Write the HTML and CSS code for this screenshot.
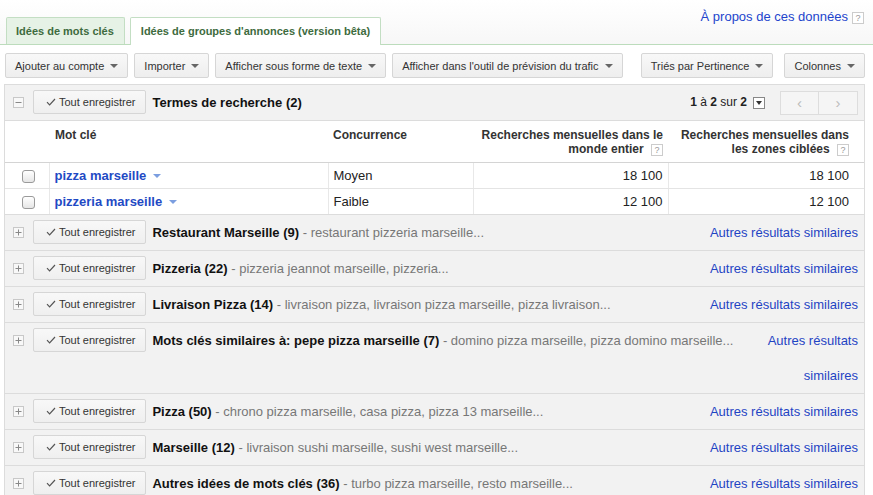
FILE: index.html
```html
<!DOCTYPE html>
<html lang="fr">
<head>
    <meta charset="UTF-8">
    <title>Idées de groupes d'annonces</title>
    <link rel="stylesheet" href="styles.css">
</head>
<body>
    <div class="top">
        <div class="tabs">
            <div class="tab">Idées de mots clés</div>
            <div class="tab active">Idées de groupes d'annonces (version bêta)</div>
        </div>
        <div class="about"><a href="#">À propos de ces données</a><span class="help">?</span></div>
    </div>

    <div class="page">
        <div class="toolbar">
            <div class="btn-group">
                <button class="btn">Ajouter au compte <span class="caret"></span></button>
                <button class="btn">Importer <span class="caret"></span></button>
                <button class="btn">Afficher sous forme de texte <span class="caret"></span></button>
                <button class="btn">Afficher dans l'outil de prévision du trafic <span class="caret"></span></button>
            </div>
            <div class="btn-group right">
                <button class="btn">Triés par Pertinence <span class="caret"></span></button>
                <button class="btn">Colonnes <span class="caret"></span></button>
            </div>
        </div>

        <div class="panel">
            <div class="group">
                <span class="toggle"><svg width="11" height="11" viewBox="0 0 11 11"><path d="M2.5 5.5h6" stroke="#888" stroke-width="1"/></svg></span>
                <button class="save"><svg width="10" height="8" viewBox="0 0 10 8"><path d="M1 4.2l2.6 2.6L9 1" fill="none" stroke="#555" stroke-width="1.2"/></svg>Tout enregistrer</button>
                <div class="group-text"><b>Termes de recherche (2)</b></div>
                <div class="pager">
                    <span class="count"><b>1</b> à <b>2</b> sur <b>2</b></span>
                    <span class="pager-menu"></span>
                    <span class="pager-btns">
                        <button>&lsaquo;</button><button>&rsaquo;</button>
                    </span>
                </div>
            </div>

            <table class="kw">
                <thead>
                    <tr>
                        <th class="c-check"></th>
                        <th class="c-kw">Mot clé</th>
                        <th class="c-comp">Concurrence</th>
                        <th class="c-num">Recherches mensuelles dans le monde entier <span class="help">?</span></th>
                        <th class="c-num last">Recherches mensuelles dans les zones ciblées <span class="help">?</span></th>
                    </tr>
                </thead>
                <tbody>
                    <tr>
                        <td class="c-check"><input type="checkbox"></td>
                        <td class="c-kw"><a href="#">pizza marseille</a><span class="kw-caret"></span></td>
                        <td>Moyen</td>
                        <td class="c-num">18 100</td>
                        <td class="c-num last">18 100</td>
                    </tr>
                    <tr>
                        <td class="c-check"><input type="checkbox"></td>
                        <td class="c-kw"><a href="#">pizzeria marseille</a><span class="kw-caret"></span></td>
                        <td>Faible</td>
                        <td class="c-num">12 100</td>
                        <td class="c-num last">12 100</td>
                    </tr>
                </tbody>
            </table>

            <div class="group">
                <span class="toggle"><svg width="11" height="11" viewBox="0 0 11 11"><path d="M2.5 5.5h6M5.5 2.5v6" stroke="#888" stroke-width="1"/></svg></span>
                <button class="save"><svg width="10" height="8" viewBox="0 0 10 8"><path d="M1 4.2l2.6 2.6L9 1" fill="none" stroke="#555" stroke-width="1.2"/></svg>Tout enregistrer</button>
                <div class="group-text"><b>Restaurant Marseille (9)</b> <span class="desc">- restaurant pizzeria marseille...</span></div>
                <a class="more" href="#">Autres résultats similaires</a>
            </div>
            <div class="group">
                <span class="toggle"><svg width="11" height="11" viewBox="0 0 11 11"><path d="M2.5 5.5h6M5.5 2.5v6" stroke="#888" stroke-width="1"/></svg></span>
                <button class="save"><svg width="10" height="8" viewBox="0 0 10 8"><path d="M1 4.2l2.6 2.6L9 1" fill="none" stroke="#555" stroke-width="1.2"/></svg>Tout enregistrer</button>
                <div class="group-text"><b>Pizzeria (22)</b> <span class="desc">- pizzeria jeannot marseille, pizzeria...</span></div>
                <a class="more" href="#">Autres résultats similaires</a>
            </div>
            <div class="group">
                <span class="toggle"><svg width="11" height="11" viewBox="0 0 11 11"><path d="M2.5 5.5h6M5.5 2.5v6" stroke="#888" stroke-width="1"/></svg></span>
                <button class="save"><svg width="10" height="8" viewBox="0 0 10 8"><path d="M1 4.2l2.6 2.6L9 1" fill="none" stroke="#555" stroke-width="1.2"/></svg>Tout enregistrer</button>
                <div class="group-text"><b>Livraison Pizza (14)</b> <span class="desc">- livraison pizza, livraison pizza marseille, pizza livraison...</span></div>
                <a class="more" href="#">Autres résultats similaires</a>
            </div>
            <div class="group">
                <span class="toggle"><svg width="11" height="11" viewBox="0 0 11 11"><path d="M2.5 5.5h6M5.5 2.5v6" stroke="#888" stroke-width="1"/></svg></span>
                <button class="save"><svg width="10" height="8" viewBox="0 0 10 8"><path d="M1 4.2l2.6 2.6L9 1" fill="none" stroke="#555" stroke-width="1.2"/></svg>Tout enregistrer</button>
                <div class="group-text"><b>Mots clés similaires à: pepe pizza marseille (7)</b> <span class="desc">- domino pizza marseille, pizza domino marseille...</span></div>
                <a class="more" href="#">Autres résultats similaires</a>
            </div>
            <div class="group">
                <span class="toggle"><svg width="11" height="11" viewBox="0 0 11 11"><path d="M2.5 5.5h6M5.5 2.5v6" stroke="#888" stroke-width="1"/></svg></span>
                <button class="save"><svg width="10" height="8" viewBox="0 0 10 8"><path d="M1 4.2l2.6 2.6L9 1" fill="none" stroke="#555" stroke-width="1.2"/></svg>Tout enregistrer</button>
                <div class="group-text"><b>Pizza (50)</b> <span class="desc">- chrono pizza marseille, casa pizza, pizza 13 marseille...</span></div>
                <a class="more" href="#">Autres résultats similaires</a>
            </div>
            <div class="group">
                <span class="toggle"><svg width="11" height="11" viewBox="0 0 11 11"><path d="M2.5 5.5h6M5.5 2.5v6" stroke="#888" stroke-width="1"/></svg></span>
                <button class="save"><svg width="10" height="8" viewBox="0 0 10 8"><path d="M1 4.2l2.6 2.6L9 1" fill="none" stroke="#555" stroke-width="1.2"/></svg>Tout enregistrer</button>
                <div class="group-text"><b>Marseille (12)</b> <span class="desc">- livraison sushi marseille, sushi west marseille...</span></div>
                <a class="more" href="#">Autres résultats similaires</a>
            </div>
            <div class="group">
                <span class="toggle"><svg width="11" height="11" viewBox="0 0 11 11"><path d="M2.5 5.5h6M5.5 2.5v6" stroke="#888" stroke-width="1"/></svg></span>
                <button class="save"><svg width="10" height="8" viewBox="0 0 10 8"><path d="M1 4.2l2.6 2.6L9 1" fill="none" stroke="#555" stroke-width="1.2"/></svg>Tout enregistrer</button>
                <div class="group-text"><b>Autres idées de mots clés (36)</b> <span class="desc">- turbo pizza marseille, resto marseille...</span></div>
                <a class="more" href="#">Autres résultats similaires</a>
            </div>
        </div>
    </div>
</body>
</html>
```

FILE: styles.css
```css
body {
    margin: 0;
    font-family: "Liberation Sans", Arial, sans-serif;
    font-size: 13px;
    color: #222;
    background-color: #fff;
}

a {
    text-decoration: none;
}

/* top tabs */
.top {
    display: flex;
    justify-content: space-between;
    height: 44px;
    border-bottom: 1px solid #bcdcbc;
    background: linear-gradient(#fff, #f7f7f7);
}

.tabs {
    display: flex;
    align-items: flex-end;
    padding-left: 6px;
    gap: 5px;
}

.tab {
    height: 26px;
    line-height: 26px;
    padding: 0 10px 0 9px;
    border: 1px solid #c3dec3;
    border-bottom: none;
    background-color: #e6f2e6;
    color: #3e6b3e;
    font-size: 11px;
    font-weight: bold;
    border-radius: 2px 2px 0 0;
}

.tab.active {
    height: 27px;
    margin-bottom: -1px;
    padding: 0 10px;
    background-color: #fff;
}

.about {
    padding: 9px 9px 0 0;
    font-size: 13px;
}

.about a {
    color: #2244cc;
}

.help {
    display: inline-block;
    width: 10px;
    height: 10px;
    margin-left: 4px;
    border: 1px solid #ccc;
    background-color: #fff;
    color: #999;
    font-size: 9px;
    line-height: 10px;
    text-align: center;
    vertical-align: 0;
    font-weight: normal;
}

/* toolbar */
.page {
    padding-left: 4px;
    width: 861px;
}

.toolbar {
    display: flex;
    justify-content: space-between;
    padding: 8px 0 0 1px;
}

.btn-group {
    display: flex;
    gap: 6px;
}

.btn-group.right {
    gap: 11px;
}

.btn {
    flex: none;
    height: 25px;
    padding: 0 9px;
    border: 1px solid #d6d6d6;
    border-radius: 2px;
    background: linear-gradient(#f8f8f8, #eeeeee);
    font-family: inherit;
    font-size: 11px;
    color: #333;
    white-space: nowrap;
}

.caret {
    display: inline-block;
    margin-left: 3px;
    vertical-align: 2px;
    border-left: 4px solid transparent;
    border-right: 4px solid transparent;
    border-top: 4px solid #666;
}

/* panel */
.panel {
    margin-top: 6px;
    border: 1px solid #dcdcdc;
    border-bottom: none;
}

.group {
    display: flex;
    align-items: flex-start;
    min-height: 35px;
    line-height: 35px;
    padding-left: 8px;
    background-color: #f2f2f2;
    border-bottom: 1px solid #dcdcdc;
}

.kw + .group {
    border-top: 1px solid #dcdcdc;
}

.toggle {
    display: flex;
    flex: none;
    width: 11px;
    height: 11px;
    margin-top: 12px;
    border: 1px solid #c8c8c8;
    background-color: #f8f8f8;
    box-sizing: border-box;
}

.toggle svg {
    margin: -1px;
}

.save {
    display: flex;
    flex: none;
    align-items: center;
    gap: 3px;
    height: 24px;
    margin: 5px 6px 0 9px;
    padding: 0 10px 0 12px;
    border: 1px solid #d6d6d6;
    border-radius: 2px;
    background: linear-gradient(#f8f8f8, #efefef);
    font-family: inherit;
    font-size: 11px;
    color: #333;
    white-space: nowrap;
}

.group-text {
    flex: none;
    white-space: nowrap;
}

.group-text b {
    color: #111;
}

.desc {
    color: #777;
}

.more {
    flex: 1;
    min-width: 0;
    padding: 0 6px 0 25px;
    text-align: right;
    color: #1f44c4;
}

.pager {
    display: flex;
    align-items: center;
    margin-left: auto;
    height: 35px;
    padding-right: 6px;
}

.count {
    font-size: 12px;
    color: #222;
}

.pager-menu {
    position: relative;
    width: 10px;
    height: 10px;
    margin: 0 15px 0 6px;
    border: 1px solid #888;
    background-color: #fff;
}

.pager-menu::after {
    content: "";
    position: absolute;
    left: 2px;
    top: 3px;
    border-left: 3px solid transparent;
    border-right: 3px solid transparent;
    border-top: 4px solid #333;
}

.pager-btns {
    display: flex;
}

.pager-btns button {
    width: 39px;
    height: 24px;
    border: 1px solid #ddd;
    background-color: #f5f5f5;
    color: #bbb;
    font-family: inherit;
    font-size: 15px;
    line-height: 18px;
}

.pager-btns button + button {
    border-left: none;
}

/* keyword table */
.kw {
    width: 100%;
    table-layout: fixed;
    border-collapse: collapse;
    background-color: #fff;
}

.kw th {
    height: 34px;
    padding: 7px 5px 0;
    vertical-align: top;
    text-align: left;
    font-size: 12px;
    line-height: 14px;
    color: #333;
    border-bottom: 1px solid #d4d4d4;
}

.kw td {
    height: 25px;
    padding: 0 5px;
    border-bottom: 1px solid #e4e4e4;
    border-left: 1px solid #e8e8e8;
}

.kw td:first-child {
    border-left: none;
}

.kw tbody tr:last-child td {
    border-bottom: none;
}

.kw th.c-check {
    width: 34px;
}

.kw td.c-check {
    text-align: center;
}

.kw th.c-kw {
    padding-left: 6px;
    width: 268px;
}

.kw th.c-comp {
    width: 135px;
}

.kw .c-num {
    text-align: right;
}

.kw .c-num.last {
    padding-right: 15px;
}

.kw th.c-num {
    width: 185px;
}

.kw th.c-num.last {
    width: auto;
}

.kw input {
    appearance: none;
    width: 13px;
    height: 13px;
    margin: 4px 0 0 3px;
    border: 1px solid #9a9a9a;
    border-radius: 3px;
    background: linear-gradient(#fff, #e6e6e6);
}

.kw a {
    font-weight: bold;
    color: #1f4ac4;
}

.kw-caret {
    display: inline-block;
    margin-left: 7px;
    vertical-align: 2px;
    border-left: 4px solid transparent;
    border-right: 4px solid transparent;
    border-top: 4px solid #7b9ee0;
}
```
